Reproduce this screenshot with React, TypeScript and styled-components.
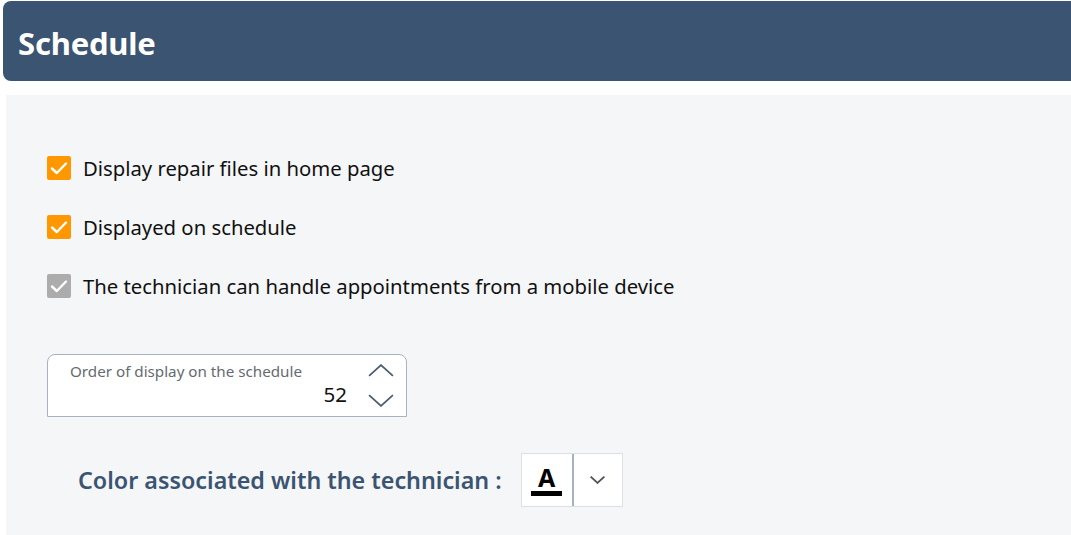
import React, { useState } from "react";
import styled, { createGlobalStyle } from "styled-components";

const GlobalStyle = createGlobalStyle`
  html, body {
    margin: 0;
    padding: 0;
    background: #ffffff;
    font-family: "Noto Sans", "Open Sans", sans-serif;
  }
`;

const Page = styled.div`
  width: 1071px;
  height: 535px;
  overflow: hidden;
  padding-top: 1px;
  box-sizing: border-box;
`;

const Header = styled.div`
  margin-left: 3px;
  height: 80px;
  background: #3a5472;
  border-radius: 8px 0 0 8px;
  display: flex;
  align-items: center;
  padding-left: 15px;
`;

const Title = styled.h1`
  margin: 3px 0 0;
  color: #ffffff;
  font-size: 31px;
  font-weight: 700;
  letter-spacing: -0.2px;
`;

const Panel = styled.div`
  margin: 14px 0 0 6px;
  background: #f5f6f8;
  height: 460px;
  padding: 61px 0 0 40px;
  box-sizing: border-box;
`;

const CheckList = styled.div`
  display: flex;
  flex-direction: column;
  gap: 35px;
`;

const CheckRow = styled.label`
  display: flex;
  align-items: center;
  gap: 12px;
  height: 24px;
  font-size: 20.3px;
  color: #111;
  cursor: pointer;
`;

const Box = styled.span<{ disabled?: boolean }>`
  width: 24px;
  height: 24px;
  margin-left: 1px;
  border-radius: 2px;
  background: ${(p) => (p.disabled ? "#acacac" : "#ff9800")};
  display: flex;
  align-items: center;
  justify-content: center;
`;

const NumberField = styled.div`
  margin-top: 56px;
  margin-left: 1px;
  width: 360px;
  height: 63px;
  border: 1px solid #a8b3c1;
  border-radius: 8px 8px 0 0;
  background: #ffffff;
  display: flex;
  box-sizing: border-box;
`;

const FieldBody = styled.div`
  flex: 1;
  display: flex;
  flex-direction: column;
  padding: 6px 0 0 22px;
`;

const FieldLabel = styled.span`
  font-size: 15.2px;
  color: #666a70;
`;

const FieldValue = styled.span`
  font-size: 20.5px;
  color: #111;
  text-align: right;
  line-height: 26px;
`;

const Spinner = styled.div`
  width: 51px;
  display: flex;
  flex-direction: column;
  align-items: center;
  justify-content: center;
  gap: 17px;
  padding-left: 8px;
`;

const ColorRow = styled.div`
  margin-top: 36px;
  margin-left: 32px;
  display: flex;
  align-items: center;
  gap: 19px;
`;

const ColorLabel = styled.span`
  font-size: 23.3px;
  font-weight: 600;
  color: #3a5472;
`;

const ColorButton = styled.div`
  display: flex;
  height: 54px;
  border: 1px solid #dcdfe3;
  background: #ffffff;
  box-sizing: border-box;
`;

const Swatch = styled.div`
  width: 50px;
  display: flex;
  flex-direction: column;
  align-items: center;
  justify-content: center;
  border-right: 2px solid #a8b3c1;
`;

const Letter = styled.span`
  font-size: 25px;
  font-weight: 700;
  line-height: 24px;
  color: #000;
`;

const ColorBar = styled.span<{ color: string }>`
  width: 31px;
  height: 5px;
  margin-top: 2px;
  background: ${(p) => p.color};
`;

const Drop = styled.div`
  width: 48px;
  display: flex;
  align-items: center;
  justify-content: center;
`;

const Check = () => (
  <svg width="18" height="14" viewBox="0 0 18 14">
    <path d="M2 7.5 L6.8 12 L16 2.5" fill="none" stroke="#fff" strokeWidth="2.4" strokeLinecap="round" strokeLinejoin="round" />
  </svg>
);

const Chevron = ({ up, size = 24, color = "#4b5b70", weight = 1.6 }: { up?: boolean; size?: number; color?: string; weight?: number }) => (
  <svg width={size} height={size / 2} viewBox="0 0 24 12">
    <path d={up ? "M1 11 L12 1 L23 11" : "M1 1 L12 11 L23 1"} fill="none" stroke={color} strokeWidth={weight} />
  </svg>
);

const options = [
  { label: "Display repair files in home page", disabled: false },
  { label: "Displayed on schedule", disabled: false },
  { label: "The technician can handle appointments from a mobile device", disabled: true },
];

export default function App() {
  const [order] = useState(52);
  return (
    <Page>
      <GlobalStyle />
      <Header>
        <Title>Schedule</Title>
      </Header>
      <Panel>
        <CheckList>
          {options.map((o) => (
            <CheckRow key={o.label}>
              <Box disabled={o.disabled}>
                <Check />
              </Box>
              {o.label}
            </CheckRow>
          ))}
        </CheckList>
        <NumberField>
          <FieldBody>
            <FieldLabel>Order of display on the schedule</FieldLabel>
            <FieldValue>{order}</FieldValue>
          </FieldBody>
          <Spinner>
            <Chevron up size={26} />
            <Chevron size={26} />
          </Spinner>
        </NumberField>
        <ColorRow>
          <ColorLabel>Color associated with the technician :</ColorLabel>
          <ColorButton>
            <Swatch>
              <Letter>A</Letter>
              <ColorBar color="#000000" />
            </Swatch>
            <Drop>
              <Chevron size={15} color="#555" weight={3} />
            </Drop>
          </ColorButton>
        </ColorRow>
      </Panel>
    </Page>
  );
}
